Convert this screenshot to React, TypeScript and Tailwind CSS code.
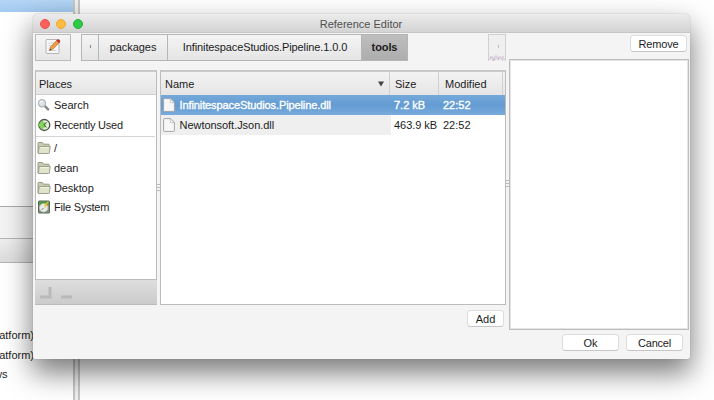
import type { ReactNode } from 'react';

function EditIcon() {
  return (
    <svg width="18" height="18" viewBox="0 0 18 18">
      <rect x="2" y="1.5" width="13" height="14" rx="1" fill="#f8f8f8" stroke="#b4b4b4" />
      <path d="M4.5 5h6M4.5 7.5h5M4.5 10h3M4.5 12.5h8" stroke="#cfcfcf" />
      <path d="M5.5 12.5l1.2-3.8L13 2l2.6 2.3-6.8 7z" fill="#ee9d45" stroke="#b2662a" strokeWidth=".6" />
      <path d="M12.4 2.5l1.5-1.3q2 .1 2.4 2.3l-1.5 1.4z" fill="#bd2c2e" />
      <path d="M5.5 12.5l.6-1.9 1.3 1.3z" fill="#444" />
    </svg>
  );
}

function SearchIcon() {
  return (
    <svg width="14" height="14" viewBox="0 0 14 14">
      <path d="M7.8 8l3.3 3.4" stroke="#858585" strokeWidth="2.4" strokeLinecap="round" />
      <circle cx="5" cy="5.2" r="3.6" fill="#d9e4ec" stroke="#b3b3b3" strokeWidth="1.2" />
      <path d="M3 5q.4-2 2.5-2" stroke="#fff" fill="none" />
    </svg>
  );
}

function RecentIcon() {
  return (
    <svg width="14" height="14" viewBox="0 0 14 14">
      <circle cx="7.3" cy="7" r="5.5" fill="#e0eed8" stroke="#4c584a" strokeWidth="1.3" />
      <path d="M.8 7l5-4.5v2.4h2.4v4.2H5.8v2.4z" fill="#86d55b" stroke="#55aa33" strokeWidth=".5" />
      <path d="M9.7 4L6.8 7l2.8 2.5" stroke="#31442b" strokeWidth=".8" fill="none" />
    </svg>
  );
}

function FolderIcon() {
  return (
    <svg width="14" height="14" viewBox="0 0 14 14">
      <path d="M1 12V2.2q0-.7.7-.7h3.6l1.2 1.7h5q.7 0 .7.8v2" fill="#c6cbb1" stroke="#949a83" />
      <path d="M2.2 5.5h11l-.8 6.5q-.1.5-.7.5H1.3z" fill="#dfe4cb" stroke="#9ca28c" />
      <path d="M3.2 6.6h8.6" stroke="#f2f5e6" />
    </svg>
  );
}

function DriveIcon() {
  return (
    <svg width="14" height="14" viewBox="0 0 14 14">
      <rect x="1.5" y="1" width="11" height="12" rx=".6" fill="#84917f" stroke="#59665a" />
      <path d="M2 1.5h10v3H2z" fill="#4b9a3c" />
      <circle cx="6.7" cy="7.8" r="4.3" fill="#e8ebe6" stroke="#b8c1b4" strokeWidth=".6" />
      <path d="M10.8 1.5L6.6 6h2.1L6.3 9l4.6-3.7H9.2L12 2z" fill="#efbf2e" />
      <path d="M4.5 10l2-2" stroke="#808880" />
    </svg>
  );
}

function FileIcon() {
  return (
    <svg width="12" height="14" viewBox="0 0 12 14">
      <path d="M.6 1.3q0-.7.7-.7h6.2l3.9 3.8v8.3q0 .7-.7.7H1.3q-.7 0-.7-.7z" fill="#f7f7f7" stroke="#a5a5a5" />
      <path d="M7.3.8v3.8h3.9z" fill="#fff" stroke="#b5b5b5" strokeWidth=".7" />
    </svg>
  );
}

function Place({ icon, children }: { icon: ReactNode; children: ReactNode }) {
  return (
    <div className="flex h-[19.7px] items-center pl-px">
      {icon}
      <span className="ml-[3px]">{children}</span>
    </div>
  );
}

function Button({ className, children }: { className: string; children: ReactNode }) {
  return (
    <button
      className={`flex h-[17px] items-center justify-center rounded-[3.5px] border border-[#dcdcdc] border-b-[#c6c6c6] bg-white ${className}`}
    >
      {children}
    </button>
  );
}

function Grip() {
  return (
    <div className="flex h-[7px] w-1 flex-col justify-between">
      <i className="h-px bg-[#b9b9b9]" />
      <i className="h-px bg-[#b9b9b9]" />
      <i className="h-px bg-[#b9b9b9]" />
    </div>
  );
}

function Backdrop() {
  return (
    <div className="flex h-full">
      <div className="flex w-[73px] flex-col bg-white">
        <div className="h-3 bg-gradient-to-b from-[#b5d5f4] to-[#a3caf0]" />
        <div className="h-[194px]" />
        <div className="h-8 border-t border-[#aaa] bg-[#f3f3f3]" />
        <div className="h-[25px] border-y border-[#b4b4b4] bg-gradient-to-b from-[#eee] to-[#dcdcdc]" />
        <div className="flex w-[34px] flex-col pt-[63px] leading-[19.7px]">
          <span className="self-end whitespace-nowrap">atform)</span>
          <span className="self-end whitespace-nowrap">atform)</span>
          <span className="-ml-[6px]">ws</span>
        </div>
      </div>
      <div className="w-[7px] border-x-2 border-x-[#c6c6c6] bg-[#f0f0f0]" />
      <div className="flex-1 bg-white" />
    </div>
  );
}

function Toolbar() {
  const crumb = 'flex items-center justify-center border-y border-r border-[#b5b5b5] pb-[2px]';
  return (
    <div className="flex h-[27px]">
      <div className="flex w-9 items-center justify-center border border-[#bbb] bg-gradient-to-b from-[#f5f5f5] to-[#e6e6e6] pb-[2px]">
        <EditIcon />
      </div>
      <div className="ml-[10px] flex bg-gradient-to-b from-[#f5f5f5] to-[#e4e4e4]">
        <div className={`${crumb} w-[18px] border-l`}>
          <i className="h-[3px] w-px bg-[#888]" />
        </div>
        <div className={`${crumb} w-[69px] tracking-[-0.05px]`}>packages</div>
        <div className={`${crumb} w-[194px] pl-px tracking-[-0.11px]`}>InfinitespaceStudios.Pipeline.1.0.0</div>
        <div className={`${crumb} w-[46px] bg-gradient-to-b from-[#bebebe] to-[#adadad] font-bold tracking-[-0.1px]`}>tools</div>
      </div>
      <div className="ml-auto flex w-[18px] flex-col items-center border border-b-0 border-[#d0d0d0] bg-[#efefef]">
        <i className="ml-[3px] mt-[10px] h-[3px] w-px bg-[#bdbdbd]" />
        <svg className="mt-auto shrink-0" width="16" height="6" viewBox="0 0 16 6">
          <path d="M0 4h2V2h2v3h2V1h2v3h2V2h2v2h4" fill="none" stroke="#cfc3d4" />
          <path d="M1 2h1m3 2h1m3-1h1m3 2h1" stroke="#a3b0d0" />
          <path d="M3 5h2m4-1h1m3-2h2" stroke="#dfb0bd" />
        </svg>
      </div>
    </div>
  );
}

function Places() {
  return (
    <div className="flex w-[122px] flex-col border border-[#bcbcbc] border-t-2 border-t-[#c9c9c9] bg-white">
      <div className="flex h-[23px] items-center border-b border-[#cfcfcf] bg-gradient-to-b from-[#f3f3f3] to-[#e5e5e5] pl-[3px] pt-px">
        Places
      </div>
      <Place icon={<SearchIcon />}>Search</Place>
      <Place icon={<RecentIcon />}><span className="tracking-[-0.2px]">Recently Used</span></Place>
      <div className="mb-px mr-px mt-[2px] h-px bg-[#d4d4d4]" />
      <Place icon={<FolderIcon />}>/</Place>
      <Place icon={<FolderIcon />}>dean</Place>
      <Place icon={<FolderIcon />}><span className="tracking-[-0.1px]">Desktop</span></Place>
      <Place icon={<DriveIcon />}><span className="tracking-[-0.2px]">File System</span></Place>
      <div className="-mx-px -mb-px mt-auto h-[26px] border-b border-t border-[#bcbcbc] bg-gradient-to-b from-[#dedede] to-[#cbcbcb]">
        <svg width="50" height="24" viewBox="0 0 50 24">
          <path d="M5 17h10V7" fill="none" stroke="#b9b9b9" strokeWidth="3" />
          <path d="M26 17h11" stroke="#b9b9b9" strokeWidth="3" />
        </svg>
      </div>
    </div>
  );
}

function Files() {
  return (
    <div className="flex w-[346px] flex-col border border-[#bcbcbc] border-t-2 border-t-[#c9c9c9] bg-white">
      <div className="flex h-[23px] items-center bg-gradient-to-b from-[#f3f3f3] to-[#e5e5e5]">
        <span className="flex h-full w-[229px] items-center justify-between border-r border-[#d0d0d0] pl-1 pr-[5px] pt-px">
          Name
          <svg width="6" height="6" viewBox="0 0 6 6"><path d="M0 .5h6L3 5.5z" fill="#444" /></svg>
        </span>
        <span className="flex h-full w-[49px] items-center border-r border-[#d0d0d0] pl-[5px] pt-px">Size</span>
        <span className="flex h-full w-16 items-center border-r border-[#d0d0d0] pl-[6px] pt-px">Modified</span>
      </div>
      <div className="flex h-5 items-center bg-gradient-to-b from-[#75a9da] via-[#639bd2] to-[#78abdc] text-white [-webkit-text-stroke:0.35px_white]">
        <span className="flex w-[229px] items-center pl-[2px]"><FileIcon /><span className="ml-[4.5px] tracking-[-0.1px]">InfinitespaceStudios.Pipeline.dll</span></span>
        <span className="w-[49px] pl-1">7.2 kB</span>
        <span className="pl-1">22:52</span>
      </div>
      <div className="flex h-5 items-center">
        <span className="flex h-full w-[230px] items-center bg-[#efefef] pl-[2px]"><FileIcon /><span className="ml-[4.5px] tracking-[-0.04px]">Newtonsoft.Json.dll</span></span>
        <span className="w-[49px] whitespace-nowrap pl-[3px] tracking-[-0.05px]">463.9 kB</span>
        <span className="pl-[3px]">22:52</span>
      </div>
    </div>
  );
}

export default function App() {
  return (
    <div className="relative h-[400px] w-[714px] overflow-hidden bg-white font-['Liberation_Sans',Arial,sans-serif] text-[11px] leading-[14px] text-[#1c1c1c]">
      <Backdrop />
      <section className="absolute left-[33px] top-[14px] flex h-[345px] w-[657px] flex-col rounded-t-[5px] rounded-b-[2px] bg-[#f4f4f4] shadow-[0_0_1px_#777,0_13px_28px_1px_rgba(0,0,0,0.52)]">
        <header className="relative flex h-[19px] items-center justify-center rounded-t-[5px] border-b border-[#c6c6c6] bg-gradient-to-b from-[#ececec] to-[#d3d3d3] pr-px pt-[2px] text-[#505050]">
          <div className="absolute left-[6.5px] top-[5px] flex gap-[6.5px]">
            <i className="size-[10px] rounded-full border border-[#ee514b] bg-[#fc605b]" />
            <i className="size-[10px] rounded-full border border-[#eca935] bg-[#fdbc40]" />
            <i className="size-[10px] rounded-full border border-[#23ad37] bg-[#2fc948]" />
          </div>
          Reference Editor
        </header>
        <div className="flex flex-1 gap-[3px] pl-[2px] pt-px">
          <div className="flex w-[471px] shrink-0 flex-col">
            <Toolbar />
            <div className="mt-[9px] flex h-[235px]">
              <Places />
              <div className="flex w-[3px] items-center"><Grip /></div>
              <Files />
            </div>
            <Button className="ml-auto mr-[2px] mt-[5px] w-[37px]">Add</Button>
          </div>
          <div className="flex w-[180px] shrink-0 flex-col pt-px">
            <Button className="ml-auto mr-[2px] w-[57px] tracking-[-0.2px]">Remove</Button>
            <div className="mt-[7px] flex h-[271px] border border-[#bdbdbd] bg-white shadow-[inset_0_0_0_1px_#e4e4e4]">
              <div className="-ml-[4px] self-center pb-[22px]"><Grip /></div>
            </div>
            <div className="mt-[4px] flex justify-end gap-[7px] pr-[6px]">
              <Button className="w-[57px] shrink-0">Ok</Button>
              <Button className="w-[57px] shrink-0 tracking-[-0.2px]">Cancel</Button>
            </div>
          </div>
        </div>
      </section>
    </div>
  );
}
